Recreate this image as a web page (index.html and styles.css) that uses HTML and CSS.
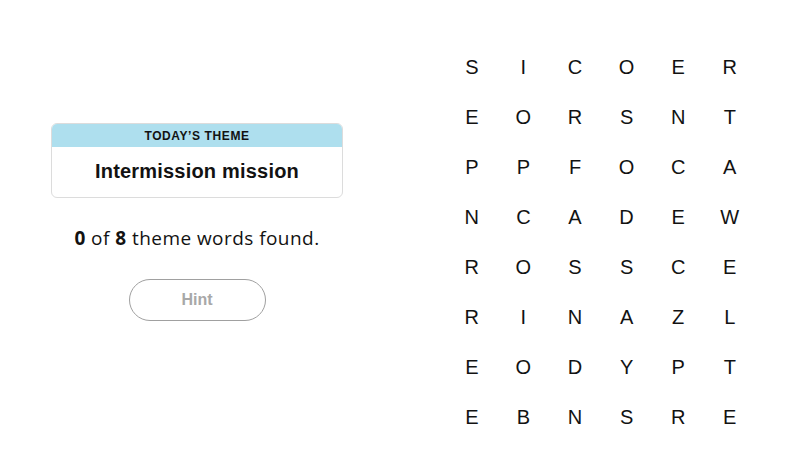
FILE: index.html
```html
<!DOCTYPE html>
<html>
<head>
<meta charset="utf-8">
<link rel="stylesheet" href="styles.css">
</head>
<body>
<main class="game">
  <section class="info">
    <div class="theme-card">
      <div class="theme-label">TODAY’S THEME</div>
      <div class="theme-title">Intermission mission</div>
    </div>
    <p class="progress"><b>0</b> of <b>8</b> theme words found.</p>
    <button class="hint">Hint</button>
  </section>
  <section class="board">
    <span>S</span><span>I</span><span>C</span><span>O</span><span>E</span><span>R</span>
    <span>E</span><span>O</span><span>R</span><span>S</span><span>N</span><span>T</span>
    <span>P</span><span>P</span><span>F</span><span>O</span><span>C</span><span>A</span>
    <span>N</span><span>C</span><span>A</span><span>D</span><span>E</span><span>W</span>
    <span>R</span><span>O</span><span>S</span><span>S</span><span>C</span><span>E</span>
    <span>R</span><span>I</span><span>N</span><span>A</span><span>Z</span><span>L</span>
    <span>E</span><span>O</span><span>D</span><span>Y</span><span>P</span><span>T</span>
    <span>E</span><span>B</span><span>N</span><span>S</span><span>R</span><span>E</span>
  </section>
</main>
</body>
</html>
```
FILE: styles.css
```css
* { box-sizing: border-box; }
html, body { margin: 0; padding: 0; background: #fff; }
body {
  font-family: "Liberation Sans", Arial, sans-serif;
  color: #121212;
  width: 800px;
  height: 475px;
  overflow: hidden;
}
.game {
  display: flex;
  align-items: flex-start;
}
.info {
  margin-left: 51px;
  margin-top: 123px;
  width: 292px;
  display: flex;
  flex-direction: column;
  align-items: center;
}
.theme-card {
  width: 292px;
  height: 75px;
  border: 1px solid #dcdcdc;
  border-radius: 6px;
  overflow: hidden;
  display: flex;
  flex-direction: column;
}
.theme-label {
  background: #aedfee;
  height: 23px;
  font-size: 12px;
  font-weight: 700;
  letter-spacing: 0.6px;
  display: flex;
  align-items: center;
  justify-content: center;
  color: #121212;
}
.theme-title {
  flex: 1;
  display: flex;
  align-items: center;
  justify-content: center;
  font-size: 20px;
  font-weight: 700;
  letter-spacing: 0.2px;
  padding-bottom: 2px;
}
.progress {
  margin: 28px 0 0;
  font-family: "Open Sans", "Liberation Sans", sans-serif;
  font-size: 19px;
  line-height: 25px;
  letter-spacing: 0.45px;
  color: #121212;
  white-space: nowrap;
}
.progress b { font-weight: 700; }
.hint {
  margin-top: 28px;
  width: 137px;
  height: 42px;
  border: 1.5px solid #a0a0a0;
  border-radius: 21px;
  background: #fff;
  color: #a8a8a8;
  font-family: "Liberation Sans", Arial, sans-serif;
  font-weight: 700;
  font-size: 16px;
  padding: 0;
}
.board {
  margin-left: 103px;
  margin-top: 42px;
  display: grid;
  grid-template-columns: repeat(6, 51.6px);
  grid-auto-rows: 50px;
}
.board span {
  display: flex;
  align-items: center;
  justify-content: center;
  font-size: 20px;
  color: #121212;
}
```
